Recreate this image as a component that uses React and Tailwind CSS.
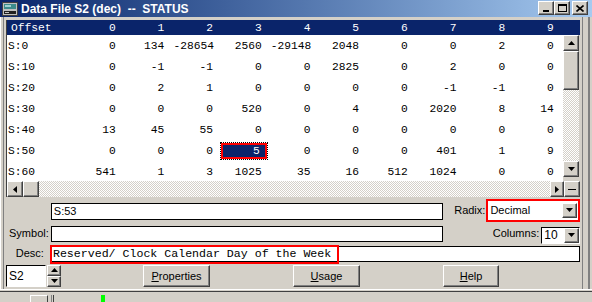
import React from "react";

const rows = [
  ["S:0", ["0", "134", "-28654", "2560", "-29148", "2048", "0", "0", "2", "0"]],
  ["S:10", ["0", "-1", "-1", "0", "0", "2825", "0", "2", "0", "0"]],
  ["S:20", ["0", "2", "1", "0", "0", "0", "0", "-1", "-1", "0"]],
  ["S:30", ["0", "0", "0", "520", "0", "4", "0", "2020", "8", "14"]],
  ["S:40", ["13", "45", "55", "0", "0", "0", "0", "0", "0", "0"]],
  ["S:50", ["0", "0", "0", "5", "0", "0", "0", "401", "1", "9"]],
  ["S:60", ["541", "1", "3", "1025", "35", "16", "512", "1024", "0", "0"]],
];

const raised =
  "border border-t-white border-l-white border-r-[#404040] border-b-[#404040] shadow-[inset_-1px_-1px_0_#808080] bg-[#d4d0c8]";
const dither =
  "bg-[repeating-conic-gradient(#ffffff_0_25%,#d4d0c8_0_50%)] bg-[length:2px_2px]";

const Tri = ({ dir = "down", size = 7 }) => {
  const pts = {
    down: "0,1 7,1 3.5,5",
    up: "0,5 7,5 3.5,1",
    left: "5,0 5,7 1,3.5",
    right: "1,0 1,7 5,3.5",
  };
  return (
    <svg width={size} height={size} viewBox="0 0 7 7">
      <polygon points={pts[dir]} fill="#000" />
    </svg>
  );
};

const ArrowBtn = ({ dir, className = "" }) => (
  <div className={`${raised} flex items-center justify-center ${className}`}>
    <Tri dir={dir} />
  </div>
);

const Btn = ({ hot, rest, className = "" }) => (
  <div
    className={`${raised} h-[22px] flex items-center justify-center text-[11px] text-black ${className}`}
  >
    <span>
      <span className="underline">{hot}</span>
      {rest}
    </span>
  </div>
);

const TitleIcon = () => (
  <svg width="16" height="14" viewBox="0 0 16 14">
    <rect x="0.5" y="0.5" width="15" height="13" fill="#c0c0c0" stroke="#404040" />
    <rect x="2" y="2" width="12" height="5" fill="#3c8c8c" />
    <rect x="3" y="3" width="6" height="2" fill="#9fd0d0" />
    <rect x="2" y="9" width="12" height="3" fill="#202020" />
    <rect x="3" y="10" width="4" height="1" fill="#c0c0c0" />
  </svg>
);

export default function App() {
  return (
    <div className="w-[592px] h-[302px] bg-[#d4d0c8] overflow-hidden font-['Liberation_Sans',Arial,sans-serif]">
      <div className="h-[292px] flex flex-col">
        {/* Title bar */}
        <div className="h-[17px] flex items-center bg-linear-to-r from-[#0a246a] to-[#a6caf0] pl-[2px] pr-[4px]">
          <TitleIcon />
          <span className="ml-[3px] text-white font-bold text-[12px] whitespace-pre leading-none">
            Data File S2 (dec)  --  STATUS
          </span>
          <div className="ml-auto flex items-center self-start mt-[1px]">
            <div className={`${raised} w-[16px] h-[14px] flex items-end justify-center pb-[2px]`}>
              <div className="w-[6px] h-[2px] bg-black" />
            </div>
            <div className={`${raised} w-[16px] h-[14px] flex items-center justify-center`}>
              <div className="w-[9px] h-[8px] border border-black border-t-2" />
            </div>
            <div className={`${raised} ml-[2px] w-[16px] h-[14px] flex items-center justify-center`}>
              <svg width="8" height="7" viewBox="0 0 8 7">
                <path d="M0.5 0.5 L7.5 6.5 M7.5 0.5 L0.5 6.5" stroke="#000" strokeWidth="1.6" />
              </svg>
            </div>
          </div>
        </div>

        {/* Body */}
        <div className="flex-1 flex">
          <div className="w-[3px] border-l border-white" />
          <div className="w-px bg-[#808080]" />
          <div className="w-[2px]" />
          <div className="w-[574px] flex flex-col pt-[3px]">
            {/* Table */}
            <div className="h-[177px] flex flex-col border-l border-[#404040] bg-white">
              <div className="h-[15px] bg-[#0a246a] text-white font-['Liberation_Mono',monospace] text-[11.25px] grid grid-cols-[69px_repeat(10,48.7px)] items-center">
                <div className="pl-[4px]">Offset</div>
                {Array.from({ length: 10 }).map((_, i) => (
                  <div key={i} className="text-right pr-[9px]">
                    {i}
                  </div>
                ))}
              </div>
              <div className="flex h-[146px]">
                <div className="w-[556px] font-['Liberation_Mono',monospace] text-[11.25px] text-black">
                  {rows.map(([label, vals], r) => (
                    <div
                      key={label}
                      className="h-[21px] grid grid-cols-[69px_repeat(10,48.7px)] items-center pt-[1px]"
                    >
                      <div className="pl-[1px]">{label}</div>
                      {vals.map((v, c) =>
                        r === 5 && c === 3 ? (
                          <div key={c} className="h-[16px] ml-[-1px] mr-[4px] border-2 border-[#ff0000] outline-1 outline-dotted outline-black">
                            <div className="h-full bg-[#0a246a] text-white text-right pr-[5px] leading-[12px]">
                              {v}
                            </div>
                          </div>
                        ) : (
                          <div key={c} className="text-right pr-[9px]">
                            {v}
                          </div>
                        )
                      )}
                    </div>
                  ))}
                </div>
                <div className="w-[17px] flex flex-col bg-[#d4d0c8]">
                  <ArrowBtn dir="up" className="h-[16px] w-[16px]" />
                  <div className={`${raised} h-[39px] w-[16px]`} />
                  <div className={`${dither} h-[71px] w-[16px]`} />
                  <ArrowBtn dir="down" className="h-[16px] w-[16px]" />
                </div>
              </div>
              {/* Horizontal scrollbar */}
              <div className="h-[16px] flex bg-[#d4d0c8]">
                <ArrowBtn dir="left" className="w-[16px] h-[16px]" />
                <div className={`${raised} w-[16px] h-[16px]`} />
                <div className={`${dither} flex-1 h-[16px]`} />
                <ArrowBtn dir="right" className="w-[14px] h-[16px]" />
                <div className={`${raised} w-[16px] h-[16px] flex items-center justify-center`}>
                  <div className="w-[8px] h-px bg-black" />
                </div>
              </div>
            </div>

            {/* Bottom panel */}
            <div className="flex flex-col text-[11px] text-black">
              <div className="h-[27px] flex items-center">
                <div className="w-[45px]" />
                <div className="w-[394px] h-[17px] border border-black bg-white flex items-center pl-[2px] mt-[1px]">
                  S:53
                </div>
                <div className="ml-[11px]">Radix:</div>
                <div className="ml-[1px] w-[94px] h-[23px] border-2 border-[#ff0000] bg-white flex items-center">
                  <span className="pl-[2px] flex-1">Decimal</span>
                  <ArrowBtn dir="down" className="w-[15px] h-[15px] mr-[1px]" />
                </div>
              </div>
              <div className="h-[19px] flex items-center">
                <div className="w-[43px] text-right">Symbol:</div>
                <div className="ml-[2px] w-[394px] h-[16px] border border-black bg-white" />
                <div className="ml-[50px]">Columns:</div>
                <div className="ml-[2px] w-[39px] h-[17px] border border-black border-r-white border-b-white bg-white flex items-center mt-[3px]">
                  <span className="pl-[2px] flex-1 text-[12px]">10</span>
                  <ArrowBtn dir="down" className="w-[15px] h-[15px]" />
                </div>
              </div>
              <div className="h-[21px] flex items-center">
                <div className="w-[38px] text-right">Desc:</div>
                <div className="relative ml-[6px] w-[531px] h-[16px] border border-black bg-white flex items-center">
                  <span className="pl-[2px] font-['Liberation_Mono',monospace] text-[11.6px] whitespace-pre">
                    Reserved/ Clock Calendar Day of the Week
                  </span>
                  <div className="absolute left-[-1px] top-[-2px] w-[289px] h-[19px] border-2 border-[#ff0000]" />
                </div>
              </div>
              <div className="h-[24px] flex items-center">
                <div className="w-[40px] h-[22px] border border-black border-r-white border-b-white bg-white flex items-center pl-[2px] text-[12px]">
                  S2
                </div>
                <div className="flex flex-col ml-[1px]">
                  <ArrowBtn dir="up" className="w-[14px] h-[11px]" />
                  <ArrowBtn dir="down" className="w-[14px] h-[11px]" />
                </div>
                <Btn hot="P" rest="roperties" className="ml-[82px] w-[67px]" />
                <Btn hot="U" rest="sage" className="ml-[83px] w-[67px]" />
                <Btn hot="H" rest="elp" className="ml-[83px] w-[56px]" />
              </div>
            </div>
          </div>
          <div className="w-[2px]" />
          <div className="w-px bg-[#808080]" />
          <div className="w-[7px] border-r-2 border-r-[#808080]" />
        </div>
        <div className="h-[2px] border-t border-white bg-[#d4d0c8]" />
        <div className="h-px bg-[#404040]" />
      </div>

      {/* Window behind */}
      <div className="h-[10px] flex items-start pt-[3px]">
        <div className="ml-[30px] w-[18px] h-[8px] border-t border-l border-white border-r border-r-[#404040]" />
        <div className="ml-[3px] w-px h-[8px] bg-[#808080]" />
        <div className="ml-[1px] w-px h-[8px] bg-[#404040]" />
        <div className="ml-[47px] w-[4px] h-[7px] bg-[#00ff00]" />
      </div>
    </div>
  );
}
